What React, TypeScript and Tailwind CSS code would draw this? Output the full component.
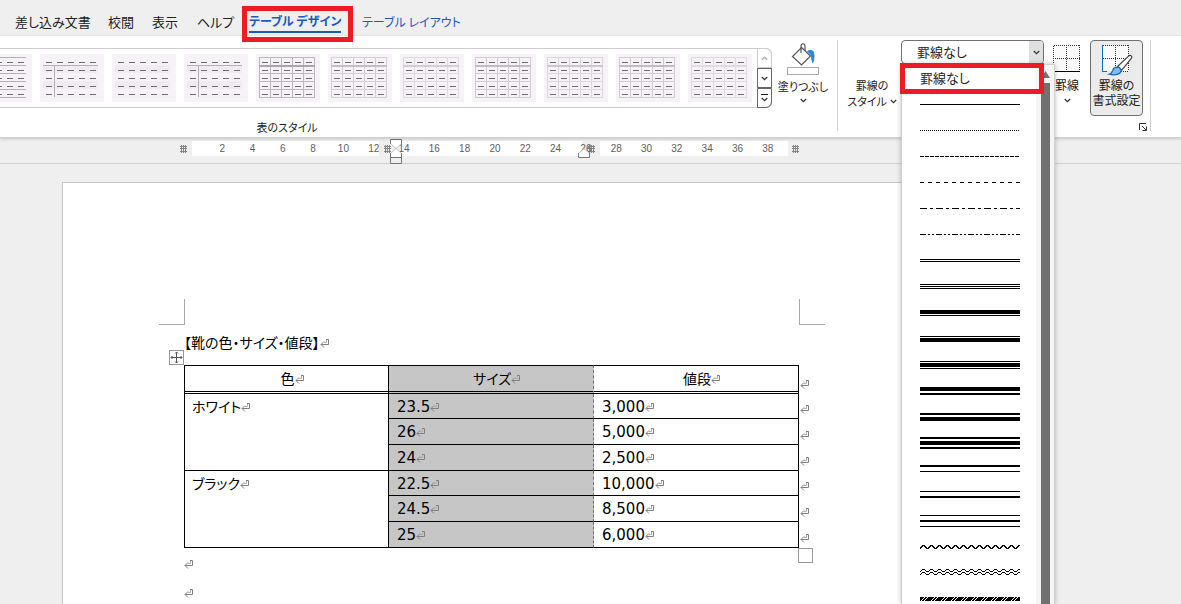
import type { ReactNode } from "react";

const tabs = [
  { label: "差し込み文書", width: "w-[93px]" },
  { label: "校閲", width: "w-[44px]" },
  { label: "表示", width: "w-[45px]" },
  { label: "ヘルプ", width: "w-[52px]" },
];

type StyleKind = "rows" | "bandedColumn" | "banded" | "grid";
type TableStyle = { kind: StyleKind; line: string; head: string };

const tableStyles: TableStyle[] = [
  { kind: "rows", line: "#b5b0b5", head: "#b5b0b5" },
  { kind: "bandedColumn", line: "#b5b0b5", head: "#b5b0b5" },
  { kind: "banded", line: "#b5b0b5", head: "#b5b0b5" },
  { kind: "bandedColumn", line: "#b5b0b5", head: "#b5b0b5" },
  { kind: "grid", line: "#bcb8bc", head: "#a9a5a9" },
  { kind: "grid", line: "#d2ced2", head: "#c2bec2" },
  { kind: "grid", line: "#dedade", head: "#d3cfd3" },
  { kind: "grid", line: "#d0ccd0", head: "#c0bcc0" },
  { kind: "grid", line: "#dad6da", head: "#cbc7cb" },
  { kind: "grid", line: "#d0ccd0", head: "#c0bcc0" },
  { kind: "grid", line: "#dedade", head: "#dedade" },
];

const columns = [0, 1, 2, 3, 4];

function StyleThumb({ kind, line, head }: TableStyle) {
  const banded = kind === "banded" || kind === "bandedColumn";
  return (
    <svg width="64" height="48" viewBox="0 0 64 48" shapeRendering="crispEdges" aria-hidden="true">
      <rect width="64" height="48" fill="#f6f2f8" />
      {banded && (
        <g fill="#efebf0">
          <rect x="3" y="11" width="55" height="8" />
          <rect x="3" y="27" width="55" height="8" />
        </g>
      )}
      {kind === "bandedColumn" && (
        <g fill={line}>
          <rect x="3" y="11" width="55" height="1" />
          <rect x="14" y="11" width="1" height="32" />
        </g>
      )}
      {(kind === "rows" || kind === "grid") &&
        [3, 11, 19, 27, 35, 43].map((y) => (
          <rect key={y} x="3" y={y} width={kind === "rows" ? 55 : 56} height="1" fill={line} />
        ))}
      {kind === "grid" && (
        <>
          {[3, 14, 25, 36, 47, 58].map((x) => (
            <rect key={x} x={x} y="3" width="1" height="41" fill={line} />
          ))}
          <rect x="3" y="11" width="56" height="2" fill={head} />
        </>
      )}
      {[8, 16, 24, 32, 40].map((y) =>
        columns.map((c) => <rect key={`${y}-${c}`} x={6 + c * 11} y={y} width="6" height="1" fill="#716c74" />)
      )}
    </svg>
  );
}

function Chevron({ up = false, color = "#333" }: { up?: boolean; color?: string }) {
  return (
    <svg width="7" height="5" viewBox="0 0 7 5" fill="none" stroke={color} strokeWidth="1.3" aria-hidden="true">
      <path d={up ? "M.8 3.8 3.5 1.2 6.2 3.8" : "M.8 1 3.5 3.6 6.2 1"} />
    </svg>
  );
}

/* Each entry lists the [top, thickness] of the solid strokes in a 26px row. */
const solidLines: { name: string; bars: number[][] }[] = [
  { name: "二重線", bars: [[12, 1], [14, 1]] },
  { name: "三重線", bars: [[11, 1], [13, 1], [15, 1]] },
  { name: "太線と細線", bars: [[11, 4], [16, 1]] },
  { name: "細線と太線", bars: [[11, 1], [13, 4]] },
  { name: "細線、太線、細線", bars: [[10, 1], [12, 4], [17, 1]] },
  { name: "太線と中線", bars: [[10, 4], [16, 2]] },
  { name: "中線と太線", bars: [[10, 2], [14, 4]] },
  { name: "中線、太線、中線", bars: [[8, 2], [12, 4], [18, 2]] },
  { name: "中線と細線", bars: [[10, 2], [16, 1]] },
  { name: "細線と中線", bars: [[10, 1], [15, 2]] },
  { name: "細線、中線、細線", bars: [[8, 1], [13, 2], [19, 1]] },
];

const dashedLines = [
  { name: "実線", dash: "none" },
  { name: "点線", dash: "1 1" },
  { name: "破線 (細)", dash: "4 1" },
  { name: "破線", dash: "4 4" },
  { name: "一点鎖線", dash: "7 3 3 3" },
  { name: "二点鎖線", dash: "6 2 2 2 2 2" },
];

function wave(y: number, half: number, height: number) {
  let d = `M0 ${y + height}`;
  for (let x = half, up = true; x <= 104; x += half, up = !up) {
    d += ` L${x - 1} ${up ? y : y + height} L${x} ${up ? y : y + height}`;
  }
  return d;
}

function LineOption({ name, children }: { name: string; children: ReactNode }) {
  return (
    <li role="option" aria-selected="false" aria-label={name} className="h-[26px] pl-[18px]">
      <svg width="100" height="26" viewBox="0 0 100 26" shapeRendering="crispEdges" fill="#000" aria-hidden="true">
        {children}
      </svg>
    </li>
  );
}

function BorderList() {
  return (
    <div className="absolute top-full left-0 flex h-[calc(100vh-64px)] w-[154px] overflow-hidden border-x border-t border-[#d0d0d0] bg-white shadow-[0_0_5px_rgba(0,0,0,0.25)]">
      <ul role="listbox" aria-label="ペンのスタイル" className="flex-1">
        <li role="option" aria-selected="true" className="flex h-[26px] items-center pl-[18px] text-[13px]">
          罫線なし
        </li>
        {dashedLines.map((l) => (
          <LineOption key={l.name} name={l.name}>
            <path d="M0 13.5H100" stroke="#000" strokeDasharray={l.dash} />
          </LineOption>
        ))}
        {solidLines.map((l) => (
          <LineOption key={l.name} name={l.name}>
            {l.bars.map(([y, h]) => (
              <rect key={y} y={y} width="100" height={h} />
            ))}
          </LineOption>
        ))}
        <LineOption name="波線">
          <path d={wave(12.5, 4, 3)} fill="none" stroke="#000" />
        </LineOption>
        <LineOption name="二重波線">
          <path d={wave(10.5, 4, 2)} fill="none" stroke="#000" />
          <path d={wave(13.5, 4, 2)} fill="none" stroke="#000" />
        </LineOption>
        <LineOption name="斜線">
          <rect y="12" width="100" height="4" />
          <path
            d={Array.from({ length: 11 }, (_, i) => `M${i * 10 + 1} 16l4-4M${i * 10 + 4} 16l4-4`).join("")}
            stroke="#fff"
          />
        </LineOption>
      </ul>
      <div className="flex w-[18px] flex-col items-center bg-[#f5f5f5] pt-[6px]">
        <svg width="9" height="7" viewBox="0 0 9 7" aria-hidden="true">
          <path d="M4.500 0 9 7H0Z" fill="#707070" />
        </svg>
        <div className="mt-[5px] w-[9px] flex-1 bg-[#707070]" />
      </div>
    </div>
  );
}

function BordersIcon() {
  return (
    <svg width="28" height="28" viewBox="0 0 28 28" shapeRendering="crispEdges" aria-hidden="true">
      <rect x="1" y="1" width="26" height="25" fill="#fafafa" />
      <path d="M.5 26V.5H27M26.500 0V26M13.500 0V26M0 13.500H27" fill="none" stroke="#333" strokeDasharray="1 1" />
      <path d="M0 26.500H27" stroke="#000" />
    </svg>
  );
}

function PainterIcon() {
  return (
    <svg width="32" height="32" viewBox="0 0 32 32" aria-hidden="true">
      <rect x="2" y="1" width="25" height="25" fill="#fafafa" />
      <g shapeRendering="crispEdges" fill="none">
        <path d="M2 .5H28M27.500 0V26M14.500 0V26M2 13.500H28M16 26.500H28" stroke="#333" strokeDasharray="1 1" />
        <path d="M1.500 0V27M1 26.500H6" stroke="#0f6cbd" />
      </g>
      <path
        d="M30.300 10.800c.8.8.6 1.600-.2 2.900L20.800 25.200l-4.300-3.700L27 11.600c1.200-1.100 2.500-1.600 3.300-.8Z"
        fill="#fff"
        stroke="#444"
        strokeWidth="1.200"
      />
      <path
        d="M15.800 22.200c2.200-.2 4.500 1.600 4.300 3.700-.4 3.400-5.800 4.800-11.800 3.300 2.600-.7 2.600-2.200 3.400-4 .7-1.800 2.200-2.900 4.100-3Z"
        fill="#7fbcec"
        stroke="#0f6cbd"
        strokeWidth="1.200"
      />
    </svg>
  );
}

function FillIcon() {
  return (
    <svg width="34" height="34" viewBox="0 0 34 34" aria-hidden="true">
      <path d="M15.500 5.500 24.500 14 15.500 23 6.500 14.500Z" fill="#fafafa" stroke="#555" strokeWidth="1.200" />
      <path d="M15 11V4.500C15 .8 19 .8 19 4.500V9" fill="none" stroke="#555" strokeWidth="1.200" />
      <path d="M21 9.500c3.500-3 7.500-1.300 7.500 3.500 0 3-.3 6-1.500 8.500-1.500-2-2-4.500-1.800-6.500-.2-2.500-2-3.500-4.200-5.500Z" fill="#2b88d8" />
      <rect x="1.500" y="25.500" width="31" height="7" fill="#fff" stroke="#aaa" />
    </svg>
  );
}

function Mark() {
  return (
    <svg width="10" height="9" viewBox="0 0 10 9" fill="none" stroke="#808080" className="inline-block align-baseline" aria-hidden="true">
      <path d="M6 .5H8.500V5.500H1M4 2.500 1 5.500 4 8.500" />
      <path d="M6.500 1V3.500H4" stroke="#b0b0b0" />
    </svg>
  );
}

function Hash() {
  return (
    <svg width="8" height="8" viewBox="0 0 8 8" stroke="#858585" shapeRendering="crispEdges" aria-hidden="true">
      <path d="M1.500 0V8M3.500 0V8M5.500 0V8M0 1.500H7M0 3.500H7M0 6.500H7" />
    </svg>
  );
}

const rulerNumbers = Array.from({ length: 19 }, (_, i) => (i + 1) * 2);

function Ruler() {
  return (
    <div className="h-[26px] shrink-0 border-b border-[#d0d0d0] pt-[3px]">
      <div className="relative ml-[180px] h-[15px] w-[620px]">
        <div className="flex h-full items-center">
          <div className="w-[12px]"><Hash /></div>
          <div className="h-full w-[187px] bg-white" />
          <div className="flex w-[22px] pl-[5px]"><Hash /></div>
          <div className="h-full w-[182px] bg-white" />
          <div className="flex w-[18px] pl-[6px]"><Hash /></div>
          <div className="h-full w-[188px] bg-white" />
          <div className="pl-[4px]"><Hash /></div>
        </div>
        <div className="absolute top-0 left-[27px] flex h-full w-[576px] items-center font-['Liberation_Sans',sans-serif] text-[10px] text-[#606060]">
          {rulerNumbers.map((n) => (
            <span key={n} className="flex-1 text-center">{n}</span>
          ))}
        </div>
        <svg className="absolute -top-[2px] left-[210px]" width="12" height="25" viewBox="0 0 12 25" aria-hidden="true">
          <path d="M.5.5H11.500V4.500L6 9.500.5 4.500ZM.5 18.500V14.500L6 9.500 11.500 14.500V18.500Z" fill="#fff" />
          <path d="M.5 4.500 6 9.500 11.500 4.500M.5 14.500 6 9.500 11.500 14.500" fill="none" stroke="#c4c4c4" />
          <path d="M.5 5V.5H11.500V5M.5 14V24.500H11.500V14M.5 18.500H11.500" fill="none" stroke="#777" />
        </svg>
        <svg className="absolute top-[7px] left-[398px]" width="12" height="10" viewBox="0 0 12 10" aria-hidden="true">
          <path d="M.5 9.500V5.500L6 .8 11.500 5.500V9.500Z" fill="#fff" />
          <path d="M.5 5.500 6 .8 11.500 5.500" fill="none" stroke="#c4c4c4" />
          <path d="M.5 5V9.500H11.500V5" fill="none" stroke="#777" />
        </svg>
      </div>
    </div>
  );
}

const groups = [
  { color: "ホワイト", rows: [["23.5", "3,000"], ["26", "5,000"], ["24", "2,500"]] },
  { color: "ブラック", rows: [["22.5", "10,000"], ["24.5", "8,500"], ["25", "6,000"]] },
];

function ShoeTable() {
  return (
    <table className="w-full table-fixed border-separate border-spacing-0 leading-5">
      <colgroup>
        <col className="w-[205px]" />
        <col className="w-[205px]" />
        <col />
        <col className="w-[14px]" />
      </colgroup>
      <thead>
        <tr className="h-[29px]">
          <th scope="col" className="border border-b-3 border-black [border-bottom-style:double] p-0 pl-3 font-normal">色<Mark /></th>
          <th scope="col" className="border-y border-r border-b-3 border-black border-r-[#707070] bg-[#c6c6c6] [border-bottom-style:double] [border-right-style:dashed] p-0 pl-3 font-normal">サイズ<Mark /></th>
          <th scope="col" className="border-y border-r border-b-3 border-black [border-bottom-style:double] p-0 pl-3 font-normal">値段<Mark /></th>
          <td className="p-0 pt-[8px] pl-px"><Mark /></td>
        </tr>
      </thead>
      <tbody>
        {groups.map((g) =>
          g.rows.map(([size, price], i) => (
            <tr key={size} className={i === 0 ? "h-[25px]" : "h-[26px]"}>
              {i === 0 && (
                <th scope="rowgroup" rowSpan={3} className="border-x border-b border-black p-0 pt-[3px] pl-[7px] text-left align-top font-normal">
                  {g.color}<Mark />
                </th>
              )}
              <td className="border-r border-b border-black border-r-[#707070] bg-[#c6c6c6] [border-right-style:dashed] p-0 pt-px pl-[8px] text-[15px]">{size}<Mark /></td>
              <td className="border-r border-b border-black p-0 pt-px pl-[8px] text-[15px]">{price}<Mark /></td>
              <td className="p-0 pt-[5px] pl-px"><Mark /></td>
            </tr>
          ))
        )}
      </tbody>
    </table>
  );
}

export default function App() {
  return (
    <div className="flex h-screen flex-col overflow-hidden bg-[#efefef] font-['Noto_Sans_CJK_JP',sans-serif] text-[#222] [font-feature-settings:'palt']">
      <nav aria-label="リボン タブ" className="flex h-9 shrink-0 items-center pt-[8px] pl-[15px] text-[13px] whitespace-nowrap">
        {tabs.map((t) => (
          <a key={t.label} href="#" className={t.width}>{t.label}</a>
        ))}
        <div className="relative w-[113px] text-xs">
          <a href="#" aria-current="page" className="block w-fit border-b-2 border-[#185abd] leading-5 font-bold text-[#185abd]">
            テーブル デザイン
          </a>
          <span className="pointer-events-none absolute -top-[5px] -left-[7px] z-20 h-[36px] w-[111px] border-5 border-[#ed1c24]" />
        </div>
        <a href="#" className="text-xs text-[#185abd]">テーブル レイアウト</a>
      </nav>

      <section aria-label="リボン" className="relative z-10 flex h-[102px] shrink-0 border-b border-[#cfcfcf] bg-white pt-[4px] text-xs shadow-[0_1px_3px_rgba(0,0,0,0.18)]">
        <div className="-ml-[198px] w-[970px] shrink-0 pt-[8px]">
          <div className="flex h-[60px] justify-end rounded-md border border-[#cccccc]">
            <div className="flex gap-2 py-[5px] pr-[5px]">
              {tableStyles.map((s, i) => (
                <button key={i} type="button" aria-label={`表のスタイル ${i + 1}`}>
                  <StyleThumb {...s} />
                </button>
              ))}
            </div>
            <div className="-my-px -mr-px flex w-[15px] flex-col">
              <button type="button" aria-label="前の行" className="flex flex-1 items-center justify-center rounded-tr-md border border-[#cccccc]"><Chevron up color="#aaa" /></button>
              <button type="button" aria-label="次の行" className="flex flex-1 items-center justify-center border border-[#666]"><Chevron /></button>
              <button type="button" aria-label="その他" className="flex flex-1 flex-col items-center justify-center gap-[2px] rounded-br-md border border-[#666]">
                <span className="h-px w-[7px] bg-[#222]" />
                <Chevron />
              </button>
            </div>
          </div>
          <p className="mt-[10px] text-center text-[11px] leading-[18px]">表のスタイル</p>
        </div>

        <button type="button" className="flex w-[62px] shrink-0 flex-col items-center pt-[2px] text-[11px]">
          <FillIcon />
          <span className="mt-[2px] leading-[16px]">塗りつぶし</span>
          <span className="mt-[4px]"><Chevron /></span>
        </button>
        <div className="ml-[3px] h-[91px] w-px shrink-0 bg-[#d0d0d0]" />
        <button type="button" className="ml-[5px] flex w-[58px] shrink-0 flex-col items-center pt-[37px] text-[11px] leading-[16px]">
          <span>罫線の</span>
          <span className="flex items-center gap-[3px] whitespace-nowrap">スタイル<Chevron /></span>
        </button>

        <div className="relative h-[24px] w-[143px] shrink-0">
          <div className="relative flex h-full overflow-hidden rounded-[4px] border border-[#707070]">
            <select aria-label="ペンのスタイル" defaultValue="none" className="w-full appearance-none pl-[15px] text-[13px] leading-[20px]">
              <option value="none">罫線なし</option>
            </select>
            <span className="pointer-events-none flex w-[14px] shrink-0 items-center justify-center bg-[#e0e0e0]"><Chevron /></span>
          </div>
          <BorderList />
          <span className="pointer-events-none absolute top-[23px] -left-px z-10 h-[31px] w-[144px] border-5 border-[#ed1c24]" />
        </div>

        <button type="button" className="ml-[6px] flex w-[34px] shrink-0 flex-col items-center pt-[5px]">
          <BordersIcon />
          <span className="mt-[4px] leading-[16px]">罫線</span>
          <span className="mt-[5px]"><Chevron /></span>
        </button>
        <button type="button" className="ml-[6px] flex h-[76px] w-[53px] shrink-0 flex-col items-center rounded-[4px] border border-[#707070] bg-[#ebebeb] pt-[4px] leading-[15px] whitespace-nowrap">
          <PainterIcon />
          <span>罫線の</span>
          <span>書式設定</span>
        </button>
        <div className="relative ml-[7px] h-[91px] w-px shrink-0 bg-[#d0d0d0]">
          <button type="button" aria-label="線種とページ罫線と網かけの設定" className="absolute right-[4px] bottom-0">
            <svg width="8" height="8" viewBox="0 0 8 8" fill="none" stroke="#333" aria-hidden="true">
              <path d="M.5 7V.5H7M3 3 7 7M7.500 3.500V7.500H3.500" />
            </svg>
          </button>
        </div>
      </section>

      <Ruler />

      <main className="mt-[18px] ml-[62px] w-[860px] flex-1 border border-b-0 border-[#c6c6c6] bg-white pt-[116px] font-['DejaVu_Sans','Noto_Sans_CJK_JP',sans-serif] text-sm text-black">
        <div className="flex justify-between px-[96px]">
          <div className="size-[26px] border-r border-b border-[#aaa]" />
          <div className="size-[26px] border-b border-l border-[#aaa]" />
        </div>
        <div className="relative ml-[121px] w-[629px]">
          <p className="h-[40px] pt-[6px] leading-6">【靴の色・サイズ・値段】<Mark /></p>
          <button type="button" aria-label="表の移動ハンドル" className="absolute top-[25px] -left-[15px] border border-[#999] bg-white">
            <svg width="13" height="13" viewBox="0 0 13 13" fill="none" stroke="#555" aria-hidden="true">
              <path d="M6.500 1V12M1 6.500H12M5 2.500 6.500 1 8 2.500M5 10.500 6.500 12 8 10.500M2.500 5 1 6.500 2.500 8M10.500 5 12 6.500 10.500 8" />
            </svg>
          </button>
          <ShoeTable />
          <div className="flex items-start justify-between">
            <div>
              <p className="h-[29px] pt-[4px] leading-6"><Mark /></p>
              <p className="h-[29px] pt-[4px] leading-6"><Mark /></p>
            </div>
            <button type="button" aria-label="表のサイズ変更ハンドル" className="size-[15px] border border-[#999] bg-white" />
          </div>
        </div>
      </main>
    </div>
  );
}
